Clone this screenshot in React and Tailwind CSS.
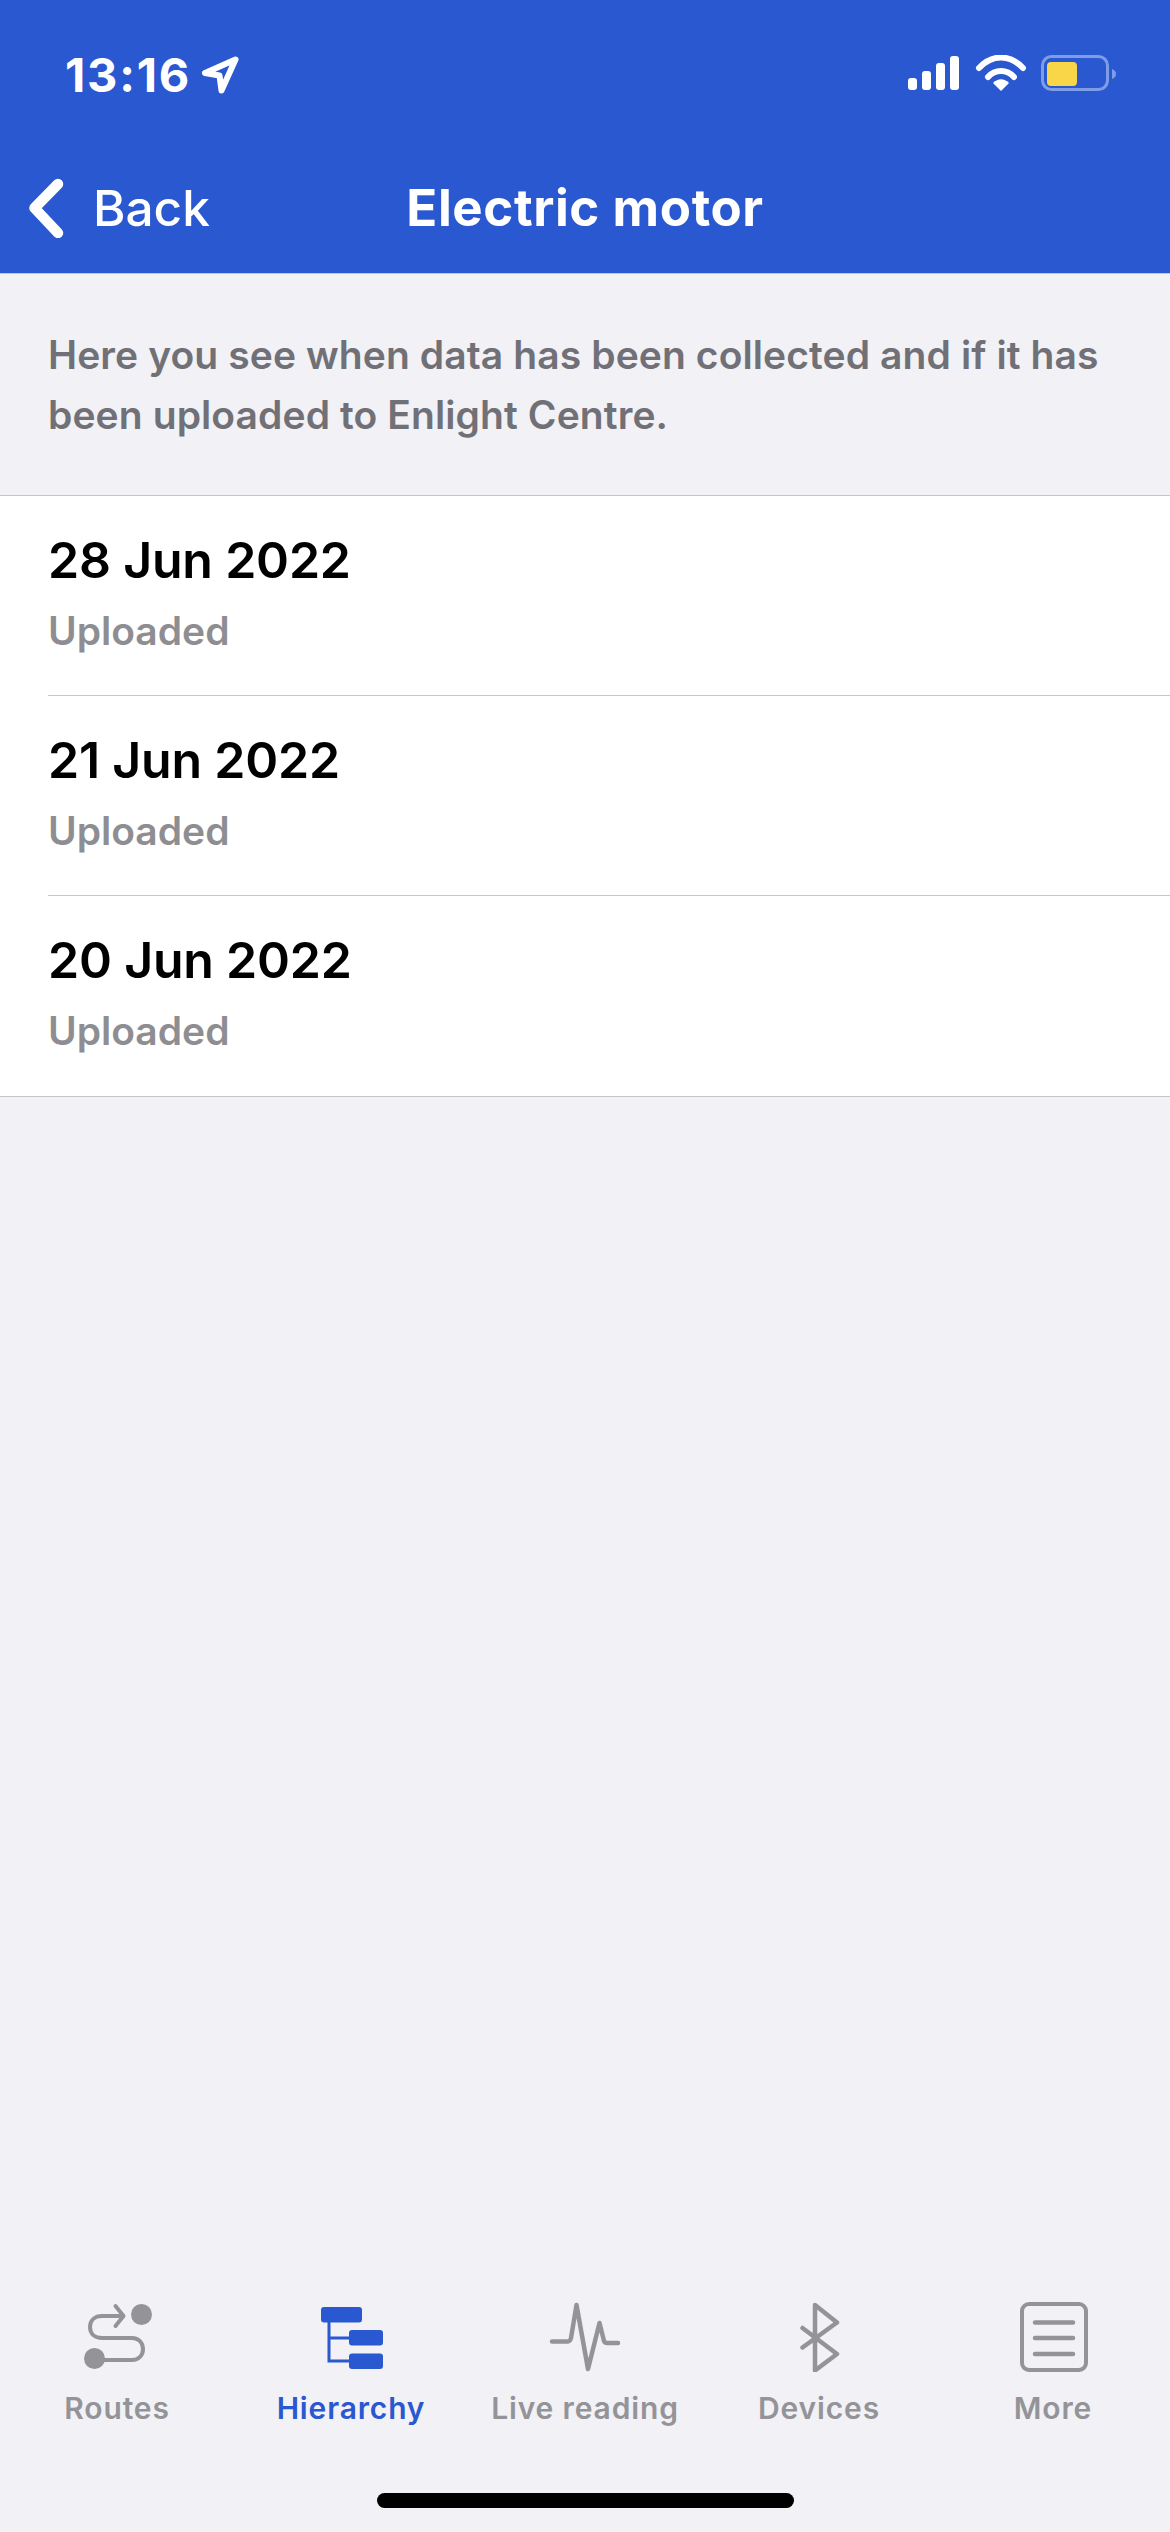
const uploads = ["28 Jun 2022", "21 Jun 2022", "20 Jun 2022"];

function StatusIcons() {
  return (
    <svg width="212" height="40" viewBox="0 0 212 40" className="block">
      <rect x="0" y="23" width="9" height="12" rx="3" fill="#fff" />
      <rect x="14" y="16" width="9" height="19" rx="3" fill="#fff" />
      <rect x="28" y="8" width="9" height="27" rx="3" fill="#fff" />
      <rect x="42" y="1" width="9" height="34" rx="3" fill="#fff" />
      <path d="M71 13 C84 -1 102 -1 115 13" fill="none" stroke="#fff" strokeWidth="6" strokeLinecap="round" />
      <path d="M80 22 C87 14 99 14 106 22" fill="none" stroke="#fff" strokeWidth="6" strokeLinecap="round" />
      <path d="M85 28 C90 23 96 23 101 28 L93 36 Z" fill="#fff" />
      <rect x="134.5" y="1.5" width="65" height="33" rx="9" fill="none" stroke="#7f9de6" strokeWidth="3" />
      <rect x="139" y="7" width="30" height="24" rx="4" fill="#f9d648" />
      <path d="M204 14 C207 15 208 17 208 19 C208 21 207 23 204 24 Z" fill="#7f9de6" />
    </svg>
  );
}

function RoutesIcon() {
  return (
    <svg width="90" height="70" viewBox="0 0 90 70" fill="none" stroke="#949498" strokeWidth="4" strokeLinecap="round" strokeLinejoin="round">
      <circle cx="69.5" cy="12.5" r="10.5" fill="#949498" stroke="none" />
      <circle cx="22.5" cy="56.5" r="10.5" fill="#949498" stroke="none" />
      <path d="M51 14 H30 C23 14 18 18 18 25 C18 32 23 36 30 36 H60 C67 36 71 41 71 47 C71 53 67 58 60 58 H25" />
      <path d="M43.5 4 L51.5 14 L43.5 24" />
    </svg>
  );
}

function HierarchyIcon() {
  return (
    <svg width="90" height="70" viewBox="0 0 90 70" fill="#2a58d0">
      <rect x="15" y="5" width="41" height="15.5" rx="3" />
      <rect x="43" y="28" width="34" height="15.5" rx="3" />
      <rect x="43" y="51.5" width="34" height="15.5" rx="3" />
      <path d="M23 20 V59 H44 M23 36 H44" fill="none" stroke="#2a58d0" strokeWidth="3" />
    </svg>
  );
}

function LiveIcon() {
  return (
    <svg width="90" height="70" viewBox="0 0 90 70" fill="none" stroke="#949498" strokeWidth="4.5" strokeLinecap="round" strokeLinejoin="round">
      <path d="M12 39.5 H28 Q30 39.5 31 36 L36.5 3 L48 67 L59.5 21 L64 39 Q65 41 67 41 H78" />
    </svg>
  );
}

function BluetoothIcon() {
  return (
    <svg width="90" height="70" viewBox="0 0 90 70" fill="none" stroke="#949498" strokeWidth="4.5" strokeLinecap="round" strokeLinejoin="round">
      <path d="M28.5 26 L63 52 L41 68.5 V3 L63 20.5 L28.5 45.5" />
    </svg>
  );
}

function MoreIcon() {
  return (
    <svg width="90" height="70" viewBox="0 0 90 70" fill="none" stroke="#949498" strokeWidth="4" strokeLinecap="round">
      <rect x="14" y="2" width="64" height="66" rx="7" />
      <path d="M27 20.5 H65 M27 36 H65 M27 52 H65" strokeWidth="4.5" />
    </svg>
  );
}

const tabs = [
  { label: "Routes", Icon: RoutesIcon },
  { label: "Hierarchy", Icon: HierarchyIcon, active: true },
  { label: "Live reading", Icon: LiveIcon },
  { label: "Devices", Icon: BluetoothIcon },
  { label: "More", Icon: MoreIcon },
];

export default function App() {
  return (
    <div className="w-[1170px] h-[2532px] flex flex-col bg-[#f1f1f6] font-['Inter',sans-serif]">
      <header className="h-[274px] shrink-0 bg-[#2a58d0] border-b border-[#c6c6c8] text-white">
        <div className="flex items-center justify-between pt-[53px] pl-[65px] pr-[50px] h-[97px]">
          <div className="flex items-center gap-[10px]">
            <span className="text-[47px] leading-[44px] font-bold tracking-[1.8px]">13:16</span>
            <svg width="38" height="38" viewBox="0 0 38 38" fill="none" stroke="#fff" strokeWidth="6" strokeLinejoin="round">
              <path d="M34.5 3.5 L4 17 L18.5 19.5 L20.5 34.5 Z" />
            </svg>
          </div>
          <StatusIcons />
        </div>
        <div className="grid grid-cols-3 items-center mt-[75px] h-[72px]">
          <div className="flex items-center pl-[28px] gap-[29px]">
            <svg width="36" height="60" viewBox="0 0 36 60" fill="none" stroke="#fff" strokeWidth="10.5" strokeLinecap="round" strokeLinejoin="round">
              <path d="M30 6 L6.5 30 L30 55" />
            </svg>
            <span className="text-[49.5px] leading-[60px] font-medium">Back</span>
          </div>
          <h1 className="text-[51px] leading-[60px] font-bold tracking-[0.6px] text-center whitespace-nowrap">Electric motor</h1>
        </div>
      </header>

      <p className="h-[221px] shrink-0 pt-[51px] pl-[48px] pr-[60px] text-[39px] leading-[60px] font-semibold tracking-[0.1px] text-[#707076]">
        Here you see when data has been collected and if it has been uploaded to Enlight Centre.
      </p>

      <section className="shrink-0 bg-white border-y border-[#c6c6c8]">
        {uploads.map((date, i) => (
          <div key={date} className="pl-[48px]">
            <div className={`h-[200px] pt-[31px] ${i < uploads.length - 1 ? "border-b border-[#c6c6c8]" : ""}`}>
              <div className="text-[50px] leading-[66px] font-semibold tracking-[-0.2px] text-black">{date}</div>
              <div className="mt-[8px] text-[39px] leading-[60px] font-semibold text-[#8e8e92]">Uploaded</div>
            </div>
          </div>
        ))}
      </section>

      <div className="flex-1" />

      <nav className="grid grid-cols-5 shrink-0">
        {tabs.map(({ label, Icon, active }) => (
          <div key={label} className="flex flex-col items-center">
            <Icon />
            <span className={`mt-[16px] text-[30px] leading-[40px] font-semibold tracking-[0.85px] whitespace-nowrap ${active ? "text-[#2a58d0]" : "text-[#949498]"}`}>
              {label}
            </span>
          </div>
        ))}
      </nav>

      <div className="h-[104px] shrink-0 flex justify-center pt-[65px]">
        <div className="w-[417px] h-[15px] rounded-full bg-black" />
      </div>
    </div>
  );
}
